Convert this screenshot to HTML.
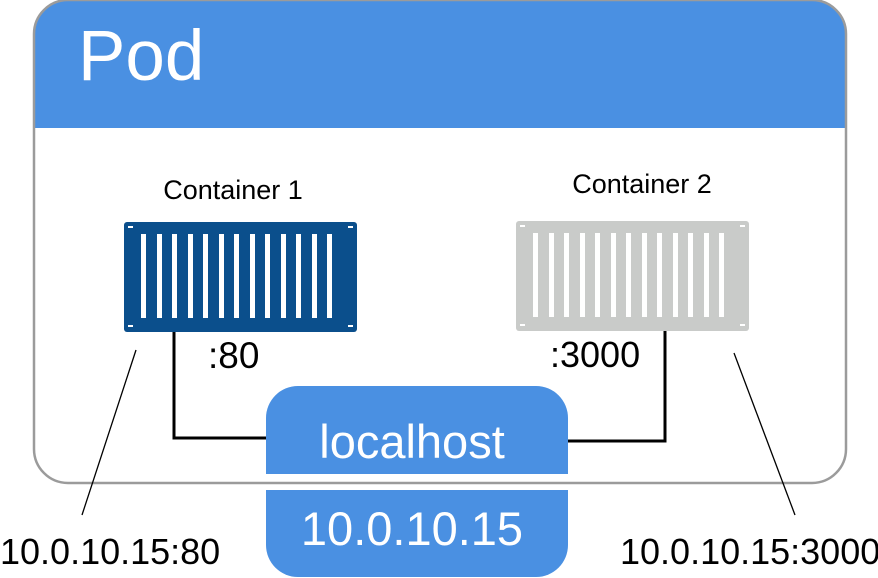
<!DOCTYPE html>
<html><head><style>html,body{margin:0;padding:0;background:#fff}svg{display:block}</style></head><body>
<svg width="878" height="578" viewBox="0 0 878 578" xmlns="http://www.w3.org/2000/svg" font-family="Liberation Sans, Arial, sans-serif">
<defs>
<clipPath id="pc"><rect x="34" y="0" width="812" height="483" rx="34"/></clipPath>
<g id="cont">
<rect x="0" y="0" width="233" height="110" rx="3"/>
<g fill="#fff">
<rect x="17" y="12" width="5" height="84"/><rect x="33" y="12" width="5" height="84"/><rect x="48" y="12" width="5" height="84"/><rect x="64" y="12" width="5" height="84"/><rect x="79" y="12" width="5" height="84"/><rect x="95" y="12" width="5" height="84"/><rect x="110" y="12" width="5" height="84"/><rect x="126" y="12" width="5" height="84"/><rect x="141" y="12" width="5" height="84"/><rect x="157" y="12" width="5" height="84"/><rect x="172" y="12" width="5" height="84"/><rect x="188" y="12" width="5" height="84"/><rect x="203" y="12" width="5" height="84"/>
<rect x="4" y="4" width="5" height="2"/><rect x="224" y="4" width="5" height="2"/><rect x="4" y="103" width="5" height="2"/><rect x="224" y="103" width="5" height="2"/>
</g>
</g>
</defs>
<g clip-path="url(#pc)">
<rect x="34" y="0" width="812" height="128" fill="#4a90e2"/>
</g>
<rect x="34" y="0" width="812" height="483" rx="34" fill="none" stroke="#9b9b9b" stroke-width="2.5"/>
<text x="78" y="80" font-size="71" fill="#fff">Pod</text>
<text x="233" y="199" font-size="27" text-anchor="middle">Container 1</text>
<text x="642" y="193" font-size="27" text-anchor="middle">Container 2</text>
<use href="#cont" x="124" y="222" fill="#0b4f8c"/>
<use href="#cont" x="516" y="221" fill="#c9cbc9"/>
<polyline points="174,332 174,438 268,438" fill="none" stroke="#000" stroke-width="3"/>
<polyline points="665,331 665,441 566,441" fill="none" stroke="#000" stroke-width="3"/>
<text x="208" y="368" font-size="37">:80</text>
<text x="550" y="367" font-size="36">:3000</text>
<path d="M266,474 V418 a32,32 0 0 1 32,-32 H536 a32,32 0 0 1 32,32 V474 Z" fill="#4a90e2"/>
<path d="M266,490 H568 V545 a32,32 0 0 1 -32,32 H298 a32,32 0 0 1 -32,-32 Z" fill="#4a90e2"/>
<text x="412" y="458" font-size="47" fill="#fff" text-anchor="middle">localhost</text>
<text x="412" y="545" font-size="47" fill="#fff" text-anchor="middle">10.0.10.15</text>
<line x1="136" y1="350" x2="82" y2="515" stroke="#000" stroke-width="1.3"/>
<line x1="734" y1="353" x2="795" y2="515" stroke="#000" stroke-width="1.3"/>
<text x="0" y="564" font-size="36">10.0.10.15:80</text>
<text x="620" y="564" font-size="36">10.0.10.15:3000</text>
</svg>
</body></html>
